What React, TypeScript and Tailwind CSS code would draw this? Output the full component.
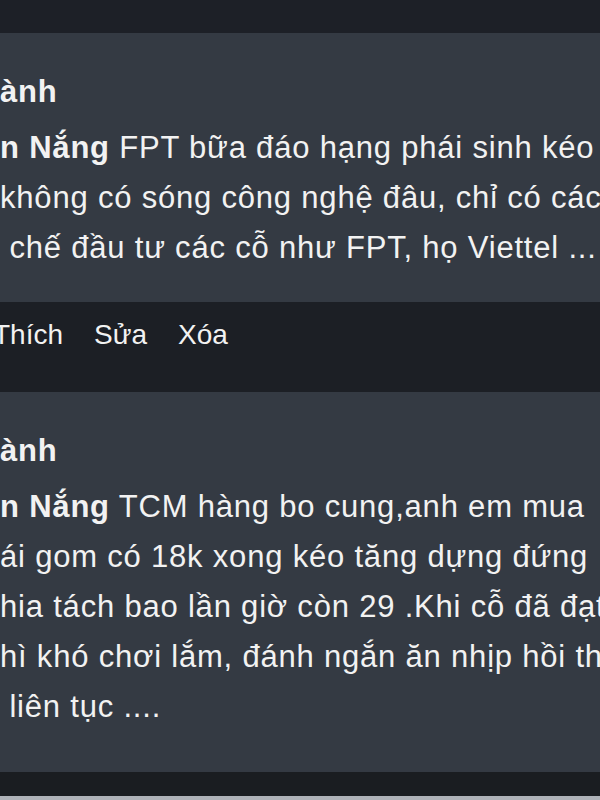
const comments = [
  {
    name: 'ành',
    author: 'n Nắng',
    first: ' FPT bữa đáo hạng phái sinh kéo',
    rest: ['không có sóng công nghệ đâu, chỉ có các', '\u00a0chế đầu tư các cỗ như FPT, họ Viettel ...'],
    pb: 'pb-[29px]',
    actions: true,
  },
  {
    name: 'ành',
    author: 'n Nắng',
    first: ' TCM hàng bo cung,anh em mua',
    rest: [
      'ái gom có 18k xong kéo tăng dựng đứng',
      'hia tách bao lần giờ còn 29 .Khi cỗ đã đạt',
      'hì khó chơi lắm, đánh ngắn ăn nhịp hồi th',
      '\u00a0liên tục ....',
    ],
    pb: 'pb-[40px]',
    actions: false,
  },
];

export default function App() {
  return (
    <div className="w-[600px] h-[800px] overflow-hidden bg-[#1c1f25] font-[family-name:Liberation_Sans,Arial,sans-serif] text-[31px] tracking-[0.8px] leading-[50px] text-[#f2f2f2] flex flex-col">
      <div className="h-[33px] shrink-0 bg-[#1d2027]" />
      {comments.map((c, i) => (
        <div key={i} className="flex flex-col shrink-0">
          <div className={`bg-[#343a43] pt-[34px] ${c.pb} whitespace-nowrap overflow-hidden`}>
            <div className="font-bold">{c.name}</div>
            <div className="mt-[6px]">
              <span className="font-bold">{c.author}</span>
              {c.first}
            </div>
            {c.rest.map((line, j) => (
              <div key={j}>{line}</div>
            ))}
          </div>
          {c.actions && (
            <div className="h-[90px] bg-[#1c1f25] pt-[8px] flex gap-[31px] text-[28px] tracking-normal overflow-hidden">
              <span className="-ml-[7px]">Thích</span>
              <span>Sửa</span>
              <span>Xóa</span>
            </div>
          )}
        </div>
      ))}
      <div className="h-[24px] shrink-0 bg-[#1a1d21]" />
      <div className="h-[4px] shrink-0 bg-[#aeb2b8]" />
    </div>
  );
}
